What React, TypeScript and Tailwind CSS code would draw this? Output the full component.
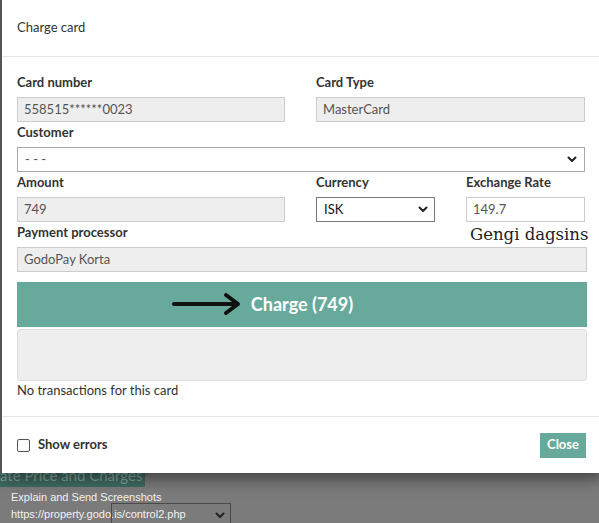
import type { FC, ReactNode } from 'react';

const Chevron: FC<{ className?: string }> = ({ className }) => (
    <svg className={className} width="10" height="7" viewBox="0 0 10 7" fill="none">
        <path d="M1.5 1.5 L5 5 L8.5 1.5" stroke="#222" strokeWidth="2" strokeLinecap="round" strokeLinejoin="round" />
    </svg>
);

const Label: FC<{ children: ReactNode }> = ({ children }) => (
    <div className="text-[13px] font-bold leading-[20px] mb-[5px] text-[#333]">{children}</div>
);

const ReadOnly: FC<{ value: string }> = ({ value }) => (
    <div className="h-[25px] bg-[#eeeeee] border border-[#cccccc] px-[6px] flex items-center text-[13px] text-[#555]">{value}</div>
);

const App: FC = () => {
    return (
        <div className="relative w-[599px] h-[523px] overflow-hidden bg-[#7b7b7b] font-['Lato','Noto_Sans',sans-serif]">
            {/* modal */}
            <div className="w-[602px] bg-white border-l-2 border-[#555] shadow-[0_5px_15px_rgba(0,0,0,0.5)] relative z-10">
                <div className="h-[57px] border-b border-[#e5e5e5] px-[15px] flex items-center text-[13px] text-[#333]">
                    Charge card
                </div>

                <div className="px-[15px] pt-[15px] pb-[16px]">
                    <div className="flex gap-[31px]">
                        <div className="w-[268px]">
                            <Label>Card number</Label>
                            <ReadOnly value="558515******0023" />
                        </div>
                        <div className="w-[269px]">
                            <Label>Card Type</Label>
                            <ReadOnly value="MasterCard" />
                        </div>
                    </div>

                    <Label>Customer</Label>
                    <div className="w-[568px] h-[25px] border border-[#a9a9a9] bg-white px-[7px] flex items-center justify-between text-[13px] text-[#555]">
                        <span>- - -</span>
                        <Chevron />
                    </div>

                    <div className="flex gap-[31px]">
                        <div className="w-[268px]">
                            <Label>Amount</Label>
                            <ReadOnly value="749" />
                        </div>
                        <div className="w-[119px]">
                            <Label>Currency</Label>
                            <div className="h-[25px] border border-[#767676] bg-white pl-[7px] pr-[6px] flex items-center justify-between text-[13px] text-[#111]">
                                <span>ISK</span>
                                <Chevron />
                            </div>
                        </div>
                        <div className="w-[119px] relative">
                            <Label>Exchange Rate</Label>
                            <div className="h-[25px] border border-[#cccccc] bg-white px-[6px] flex items-center text-[13px] text-[#555]">149.7</div>
                            <div className="absolute left-[4px] top-[53px] font-['DejaVu_Serif',serif] text-[16.5px] leading-[20px] text-[#222] whitespace-nowrap">
                                Gengi dagsins
                            </div>
                        </div>
                    </div>

                    <Label>Payment processor</Label>
                    <ReadOnly value="GodoPay Korta" />

                    <div className="relative mt-[10px] h-[45px] bg-[#67aa9c] flex items-center justify-center text-white text-[18px] font-bold">
                        Charge (749)
                        <svg className="absolute left-[154px] top-[10px]" width="72" height="24" viewBox="0 0 72 24" fill="none">
                            <path d="M3 12 H66" stroke="#111" strokeWidth="4" strokeLinecap="round" />
                            <path d="M55 3 L67 12 L55 21" stroke="#111" strokeWidth="4" strokeLinecap="round" strokeLinejoin="round" />
                        </svg>
                    </div>

                    <div className="mt-[2px] h-[52px] bg-[#eeeeee] border border-[#dddddd] rounded-[3px]" />

                    <div className="text-[13px] leading-[19px] text-[#333]">No transactions for this card</div>
                </div>

                <div className="h-[57px] border-t border-[#e5e5e5] px-[15px] flex items-center justify-between">
                    <div className="flex items-center gap-[8px]">
                        <div className="w-[13px] h-[13px] border border-[#555] rounded-[2px] bg-white" />
                        <span className="text-[13px] font-bold text-[#333]">Show errors</span>
                    </div>
                    <div className="h-[25px] px-[7px] bg-[#67aa9c] text-white text-[13px] font-bold flex items-center mr-[1px]">Close</div>
                </div>
            </div>

            {/* page behind the modal */}
            <div className="w-[145px] h-[14px] bg-[#3f6b62] overflow-hidden">
                <div className="-mt-[8px] text-[15px] leading-[20px] text-[#86a69e] whitespace-nowrap">ate Price and Charges</div>
            </div>
            <div className="mt-[2px] pl-[11px] font-['Liberation_Sans',sans-serif] text-[11px] leading-[17px] text-[#f2f2f2]">
                <div>Explain and Send Screenshots</div>
                <div>https://property.godo.is/control2.php</div>
            </div>
            <div className="absolute left-[111px] top-[503px] w-[120px] h-[24px] border border-[#4a4a4a] flex items-center justify-end pr-[5px]">
                <Chevron />
            </div>
        </div>
    );
};

export default App;
